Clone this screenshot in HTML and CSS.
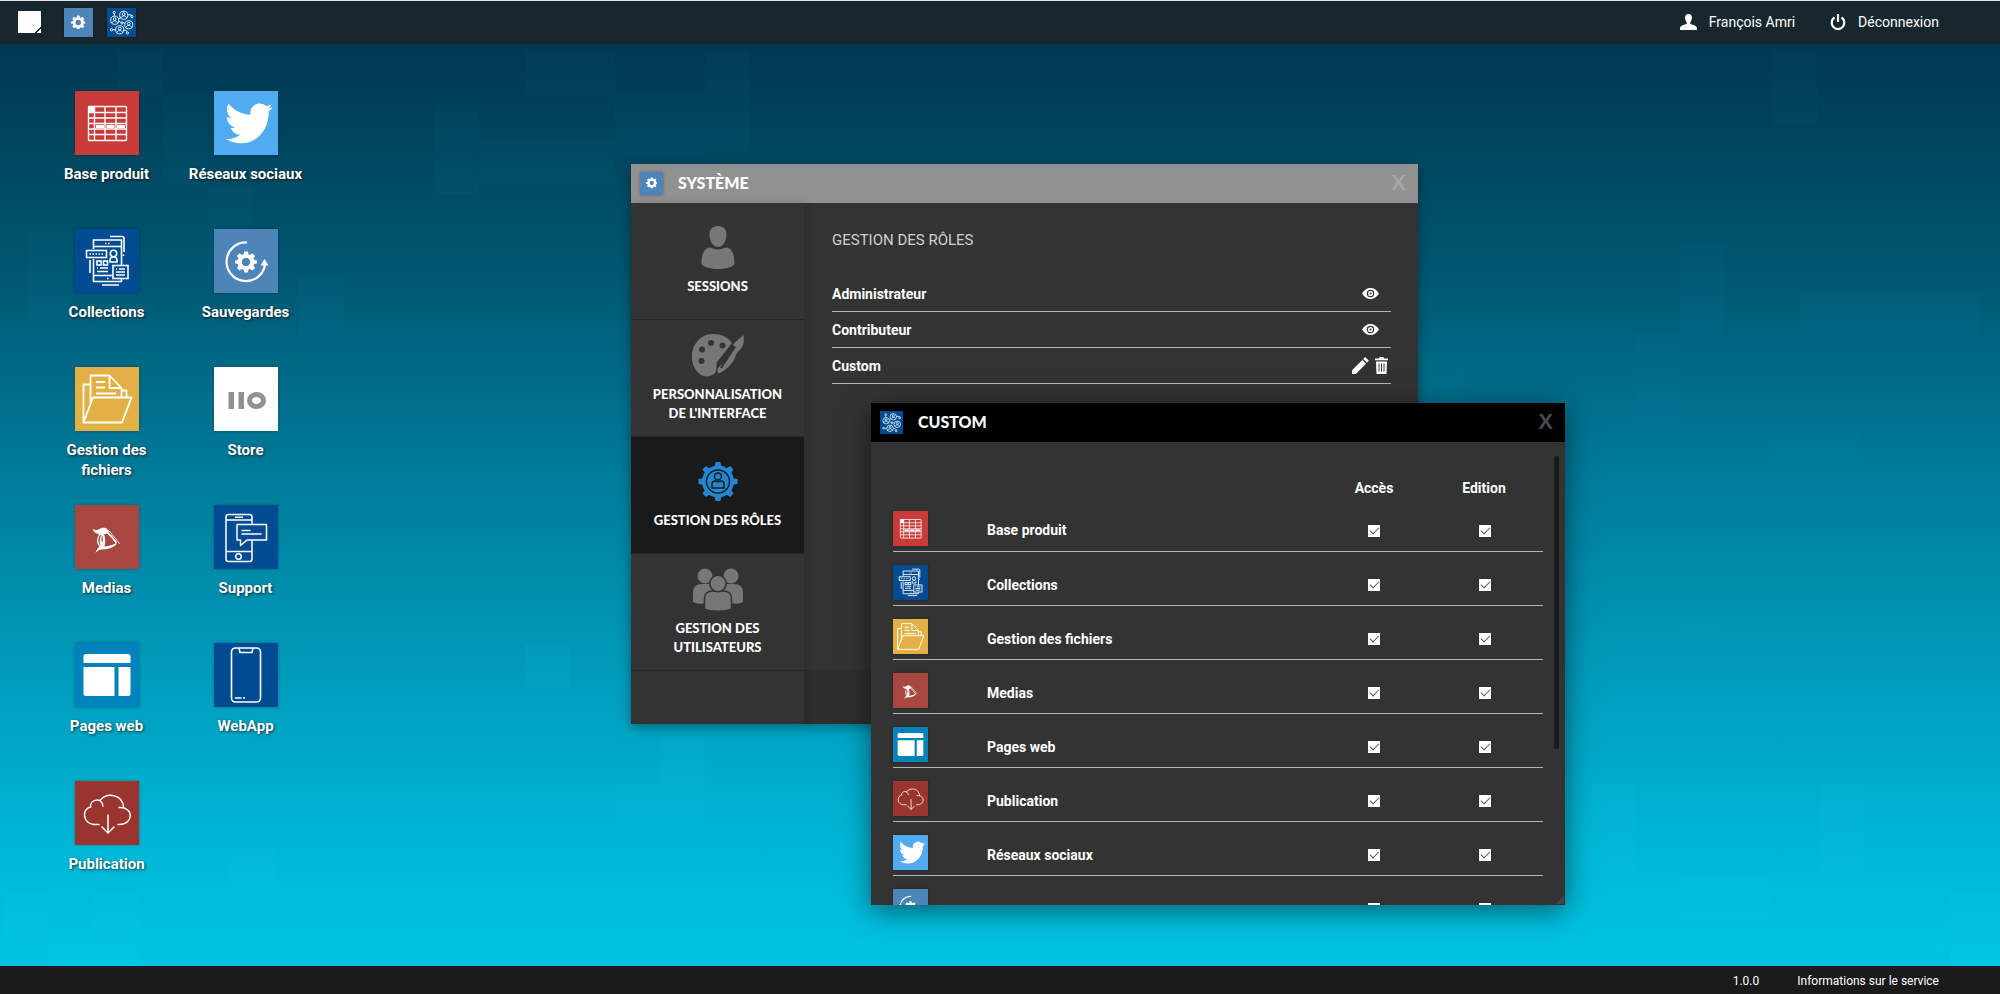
FILE: index.html
```html
<!DOCTYPE html>
<html lang="fr">
<head>
    <meta charset="UTF-8">
    <meta name="viewport" content="width=device-width, initial-scale=1.0">
    <title>Système</title>
    <link rel="stylesheet" href="styles.css">
</head>
<body>

<!-- Icônes -->
<svg class="sprite" aria-hidden="true">
    <symbol id="i-cog" viewBox="0 0 24 24">
        <path fill="currentColor" fill-rule="evenodd" d="M10 1h4l.6 3 1.9.8L19 3.1 21.9 6l-1.7 2.5.8 1.9 3 .6v3l-3 .6-.8 1.9 1.7 2.5-2.900 2.900-2.500-1.700-1.900.8-.6 3h-4l-.6-3-1.900-.8L5 21.900 2.100 19l1.700-2.500-.8-1.900-3-.6v-3l3-.6.8-1.900L2.100 6 5 3.100l2.500 1.700L9.400 4zM12 8a4.500 4.500 0 1 0 0 9 4.500 4.500 0 0 0 0-9z"/>
    </symbol>
    <symbol id="i-network" viewBox="0 0 64 64">
        <g fill="none" stroke="#fff" stroke-width="2">
            <circle cx="37" cy="16" r="9"/><circle cx="37" cy="13.500" r="3"/><path d="M31 22c1-6 11-6 12 0"/>
            <circle cx="17" cy="27" r="9"/><circle cx="17" cy="24.500" r="3"/><path d="M11 33c1-6 11-6 12 0"/>
            <circle cx="48" cy="37" r="9"/><circle cx="48" cy="34.500" r="3"/><path d="M42 43c1-6 11-6 12 0"/>
            <circle cx="28" cy="48" r="9"/><circle cx="28" cy="45.500" r="3"/><path d="M22 54c1-6 11-6 12 0"/>
            <circle cx="16" cy="10" r="2.500"/><path d="M16 13v5"/>
            <circle cx="55" cy="19" r="2.500"/><path d="M46 15h7v2M26 24l4-3M26 30h3l2 2M39 34l-3-3"/>
            <circle cx="33" cy="33" r="2.500"/>
            <circle cx="10" cy="48" r="2.500"/><path d="M13 48h6M37 49h5l2 3"/>
            <circle cx="45" cy="55" r="2.500"/>
        </g>
    </symbol>
    <symbol id="i-base" viewBox="0 0 64 64">
        <g fill="none" stroke="#fff" stroke-width="1.400">
            <rect x="13.500" y="15.500" width="38" height="34" rx="1"/>
            <path d="M19.500 15.500v34M30 15.500v34M41 15.500v34M13.500 21.500h38M13.500 27h38M13.500 32.500h38M13.500 38h38M13.500 43.500h38"/>
        </g>
        <path fill="#fff" d="M13 15h7v7h-7zM21 34h8v3h-8zM31.500 34h8v3h-8zM42 34h8v3h-8z"/>
    </symbol>
    <symbol id="i-collections" viewBox="0 0 64 64">
        <g fill="none" stroke="#fff" stroke-width="1.600">
            <path d="M18.500 20v-9h28v26M18.500 30v22.500h28V50M18.500 17.500h28M18.500 46.500h19M35 7.500h12a2 2 0 0 1 2 2V23M15 31v13M27 56h17"/>
            <rect x="11.500" y="21.500" width="20" height="7"/>
            <circle cx="38.500" cy="24.500" r="3.200"/><path d="M35 33v-2c0-4 7-4 7 0v2z"/>
            <rect x="22" y="32" width="4" height="4"/><rect x="28.500" y="32" width="4" height="4"/>
            <path d="M22 39h1M25 39h8M22 42.500h11"/>
            <rect x="38" y="36.500" width="15" height="13"/><path d="M41 40h1M44 40h6M41 43h9M41 46h9"/>
            <path d="M14.500 25h14" stroke-dasharray="1.500 1.500"/><path d="M30 14.500h1.500M33 14.500h1.500M32 49.500h1.500M48.500 25.500v1.500"/>
        </g>
    </symbol>
    <symbol id="i-files" viewBox="0 0 64 64">
        <g fill="none" stroke="#fff" stroke-width="1.800" stroke-linejoin="round">
            <path d="M8.500 55.500 18 30.500h38.500l-9.500 25zM8.500 55V17.500H15M15.500 36V8.500h19l12 12.500v9M34.500 9v12h12M47 23.500h4.500v6.500"/>
            <path d="M21 15h9M21 20.500h9M21 26.500h20"/>
        </g>
    </symbol>
    <symbol id="i-medias" viewBox="0 0 64 64">
        <path fill="#fff" d="M17.500 24c3 1.500 5 1 7 0 2-1.500 5-1.500 7 0l3 3.500-4 1.500c-3 1.500-6 1.500-8-.5-2 0-4-2-5-4.500zM20.500 48c1-3 2-5.500 5-7 5 1 10 0 16-3l-.5 2c-5 3.500-9 4.500-14 4.500-3 0-4.500 1.500-6.500 3.500zM27 28.500l2.500 2c1 4 1 8-.5 12h-3c-2-5-1.500-10 1-14z"/>
        <g fill="none" stroke="#fff">
            <path d="M31 26.500c4 3 7.500 7 10.500 11.500" stroke-width="1.600"/>
            <path d="M25 29c-3 4-3 9 0 13" stroke-width="1.200"/>
            <path d="M25 24.500c3-3 7-1 10 2.500l10 12" stroke-width=".8"/>
        </g>
        <ellipse cx="27.200" cy="34" rx=".7" ry="3" fill="#a84740"/>
    </symbol>
    <symbol id="i-pages" viewBox="0 0 64 64">
        <path fill="#fff" d="M11 11h42a2.500 2.500 0 0 1 2.500 2.500V20h-47v-6.500A2.500 2.500 0 0 1 11 11zM8.500 24h31v29H11a2.500 2.500 0 0 1-2.500-2.500zM43.500 24h12v26.500A2.500 2.500 0 0 1 53 53h-9.500z"/>
    </symbol>
    <symbol id="i-cloud" viewBox="0 0 64 64">
        <g fill="none" stroke="#fff" stroke-width="1.500" stroke-linecap="round">
            <path d="M24 43.500h-5c-12-1-12-16-3.500-17.500C15 18 27 16 28 25M25 19.500c7-9 23-6 23.500 7M44 26.500c15-1 15 17 0 17h-1"/>
            <path d="M33 34v17.500M27 46l6 6 6-6"/>
        </g>
    </symbol>
    <symbol id="i-bird" viewBox="0 0 24 24">
        <path fill="#fff" d="M20.500 7.600c.8-.5 1.200-1.100 1.300-1.500-.5.200-1 .4-1.500.4.600-.4 1-.8 1.200-1.500-.6.400-1.300.6-1.900.7-2.100-2.200-6.500-.7-5.900 3.200-3.300-.1-6.300-1.700-8.300-4.100-1.100 2-.5 4.100 1.100 5.400-.6 0-1.200-.2-1.700-.5 0 1.900 1.200 3.500 3.100 4-.5.200-1.100.2-1.600.1.500 1.500 1.800 2.600 3.500 2.600-1.400 1.100-3.300 1.800-5.600 1.500 8.600 4.900 16.500-1.300 16.300-10.300z"/>
    </symbol>
    <symbol id="i-backup" viewBox="0 0 64 64">
        <path d="M33 13.500a19.300 19.300 0 1 0 18 22" fill="none" stroke="#fff" stroke-width="2.200"/>
        <path d="M50.500 30 46.500 36.500h8z" fill="#fff"/>
        <svg x="20.500" y="21" width="23" height="23" viewBox="0 0 24 25" color="#fff"><use href="#i-cog"/></svg>
    </symbol>
    <symbol id="i-store" viewBox="0 0 64 64">
        <path fill="#919191" d="M14.500 25h5.500v17h-5.500zM24.500 25H30v17h-5.500z"/>
        <ellipse cx="42.500" cy="33.500" rx="7" ry="6" fill="none" stroke="#919191" stroke-width="5"/>
    </symbol>
    <symbol id="i-support" viewBox="0 0 64 64">
        <g fill="none" stroke="#fff" stroke-width="1.500" stroke-linejoin="round">
            <path d="M38 19.500V12a2.500 2.500 0 0 0-2.500-2.500h-21A2.500 2.500 0 0 0 12 12v42a2.500 2.500 0 0 0 2.500 2.500h21A2.500 2.500 0 0 0 38 54V35M12 15h26M12 46.500h26M21 12.200h8"/>
            <circle cx="24.500" cy="51.500" r="2.800"/>
            <path d="M23 19.500h29.500V35H33l-6.500 5.500V35H23zM27.500 25.500h9M27.500 29h20"/>
        </g>
    </symbol>
    <symbol id="i-phone" viewBox="0 0 64 64">
        <g fill="none" stroke="#fff" stroke-width="1.600">
            <rect x="17.500" y="5" width="29" height="54" rx="4"/>
            <path d="M25 5l1 4.500h12L39 5M21 55h6.500M29 55h2"/>
        </g>
    </symbol>
    <symbol id="i-person" viewBox="0 0 52 43">
        <path fill="currentColor" d="M26 0c5.500 0 8.500 3.500 8.500 8.500C34.500 15 31 21 26 21s-8.500-6-8.500-12.500C17.500 3.500 20.500 0 26 0zM17.500 21.500c2 0 4.500 2 8.500 2s6.500-2 8.500-2c5 1 8 5.500 8 16-1 4-10 5.500-16.500 5.500S10.500 41.500 9.500 37.500c0-10.500 3-15 8-16z"/>
    </symbol>
    <symbol id="i-palette" viewBox="0 0 52 43">
        <path fill="currentColor" fill-rule="evenodd" d="M21 0c8 0 15 3 19 9L25 28c-1 3 0 6-1 9-2 5-9 7-15 4C-1 35-3 18 4 9 8 3 14 0 21 0zM19 6a3 3 0 1 0 0 6 3 3 0 0 0 0-6zM30.500 8.500a3 3 0 1 0 0 6 3 3 0 0 0 0-6zM10 12.500a3 3 0 1 0 0 6 3 3 0 0 0 0-6zM9.500 24a3 3 0 1 0 0 6 3 3 0 0 0 0-6z"/>
        <path fill="currentColor" d="M51.500 1c1 6 0 11-3.500 15-3 2-4 4-5 8-3 6-9 12-15 15-3 1-3-3-2-5 7-6 12-13 18-21l-3-2c3-5 7-6 10.500-10z"/>
        <path d="M29 34l13-20" stroke="#333" stroke-width="2"/>
    </symbol>
    <symbol id="i-roles" viewBox="0 0 52 43">
        <g fill="#2485d0">
            <circle cx="26" cy="21.500" r="16"/>
            <g id="teeth"><path d="M23.500 2h5l1 6h-7zM23.500 41h5l1-6h-7zM6.500 19v5l6 1v-7zM45.500 19v5l-6 1v-7z"/></g>
            <use href="#teeth" transform="rotate(45 26 21.500)"/>
        </g>
        <g fill="none" stroke="#1a1a1a" stroke-width="1.400">
            <circle cx="26" cy="21.500" r="11.500"/><circle cx="26" cy="16.500" r="3.500"/>
            <path d="M20 28v-4c0-2 1-3 3-3 2 1 4 1 6 0 2 0 3 1 3 3v4z"/>
        </g>
    </symbol>
    <symbol id="i-users" viewBox="0 0 52 43">
        <g fill="currentColor">
            <circle cx="13" cy="8" r="7.500"/><circle cx="39" cy="8" r="7.500"/>
            <path d="M1 34V25c0-6 3-9 9-9h32c6 0 9 3 9 9v9c-4 2-8 2-12 1H13c-4 1-8 1-12-1z"/>
        </g>
        <path d="M20 10h12v8H20z" fill="#333"/>
        <g fill="currentColor" stroke="#333" stroke-width="1.500">
            <path d="M12.500 41V31c0-5 3-8 8-8h11c5 0 8 3 8 8v10c-7 3-20 3-27 0z"/><circle cx="26" cy="15.500" r="8.200"/>
        </g>
    </symbol>
    <symbol id="i-eye" viewBox="0 0 17 11">
        <path fill="currentColor" fill-rule="evenodd" d="M8.500 0C12 0 15 2 17 5.500 15 9 12 11 8.500 11S2 9 0 5.500C2 2 5 0 8.500 0zm0 1.800a3.700 3.700 0 1 0 0 7.400 3.700 3.700 0 0 0 0-7.400z"/>
        <circle cx="8.500" cy="5.500" r="1.800" fill="none" stroke="currentColor" stroke-width="1.500"/>
    </symbol>
    <symbol id="i-edit" viewBox="0 0 17 17">
        <path fill="currentColor" d="M0 13.200 10.300 3l3.700 3.700L3.800 17H0zM11.200 2l2-2 3.700 3.700-2 2z"/>
    </symbol>
    <symbol id="i-trash" viewBox="0 0 13 17">
        <path fill="currentColor" fill-rule="evenodd" d="M0 1.500h4L4.700 0h3.600L9 1.500h4V3.200H0zM1 4.500h11L11.500 17h-10zM3.500 6.500v8h1v-8zm2.500 0v8h1v-8zm2.500 0v8h1v-8z"/>
    </symbol>
    <symbol id="i-user" viewBox="0 0 17 16">
        <path fill="currentColor" d="M8.500 0c2.300 0 3.600 1.500 3.400 4-.1 2-.8 3.500-1.600 4.200v1.600c2.500 1.200 6.200 1.700 6.700 4.200v2H0v-2c.5-2.500 4.200-3 6.700-4.200V8.200C5.900 7.500 5.200 6 5.100 4 4.900 1.500 6.200 0 8.500 0z"/>
    </symbol>
    <symbol id="i-power" viewBox="0 0 16 17">
        <path d="M4.500 3.500a6.300 6.300 0 1 0 7 0M8 0v8" fill="none" stroke="currentColor" stroke-width="2.200"/>
    </symbol>
</svg>

<header class="topbar">
    <nav class="tasks">
        <button class="show-desktop" aria-label="Bureau"></button>
        <button class="tile task steel" aria-label="Système"><svg class="small-cog"><use href="#i-cog"/></svg></button>
        <button class="tile task navy" aria-label="Custom"><svg><use href="#i-network"/></svg></button>
    </nav>
    <div class="session">
        <a href="#" class="user"><svg><use href="#i-user"/></svg>François Amri</a>
        <a href="#" class="logout"><svg><use href="#i-power"/></svg>Déconnexion</a>
    </div>
</header>

<main class="desktop">
    <svg class="mosaic" aria-hidden="true">
        <g fill="#12a0c0" fill-opacity=".04">
            <path d="M118 6h45v45h-45zM163 51h45v90h-45zM208 141h45v45h-45zM27 187h45v90h-45zM208 187h45v45h-45zM298 232h45v60h-45z"/>
            <path d="M434 60h45v90h-45zM525 6h90v45h-90zM615 51h90v60h-90zM480 96h135v45H480zM705 6h45v100h-45zM1772 6h45v75h-45zM1420 308h45v45h-45z"/>
            <path d="M1500 380h45v45h-45zM1680 200h45v90h-45zM1635 290h45v90h-45zM1770 380h90v45h-90zM1800 250h180v45h-180zM1680 560h45v45h-45z"/>
        </g>
        <g fill="#20e0ff" fill-opacity=".05">
            <path d="M230 803h45v45h-45zM4 848h45v45H4zM94 848h45v45H94zM49 893h90v30H49zM615 740h90v45h-90zM660 695h45v45h-45zM525 600h45v45h-45zM1590 740h45v90h-45zM1680 830h90v45h-90zM1820 740h45v90h-45zM1950 850h50v70h-50z"/>
        </g>
    </svg>

    <div class="shortcuts">
        <a href="#" class="shortcut"><span class="tile red"><svg><use href="#i-base"/></svg></span>Base produit</a>
        <a href="#" class="shortcut"><span class="tile navy"><svg><use href="#i-collections"/></svg></span>Collections</a>
        <a href="#" class="shortcut"><span class="tile yellow"><svg><use href="#i-files"/></svg></span>Gestion des fichiers</a>
        <a href="#" class="shortcut"><span class="tile brick"><svg><use href="#i-medias"/></svg></span>Medias</a>
        <a href="#" class="shortcut"><span class="tile blue"><svg><use href="#i-pages"/></svg></span>Pages web</a>
        <a href="#" class="shortcut"><span class="tile maroon"><svg><use href="#i-cloud"/></svg></span>Publication</a>
        <a href="#" class="shortcut"><span class="tile sky"><svg><use href="#i-bird"/></svg></span>Réseaux sociaux</a>
        <a href="#" class="shortcut"><span class="tile steel"><svg><use href="#i-backup"/></svg></span>Sauvegardes</a>
        <a href="#" class="shortcut"><span class="tile white"><svg><use href="#i-store"/></svg></span>Store</a>
        <a href="#" class="shortcut"><span class="tile navy"><svg><use href="#i-support"/></svg></span>Support</a>
        <a href="#" class="shortcut"><span class="tile navy"><svg><use href="#i-phone"/></svg></span>WebApp</a>
    </div>

    <section class="window system">
        <header class="titlebar">
            <span class="tile steel"><svg class="small-cog"><use href="#i-cog"/></svg></span>
            <h1>Système</h1>
            <button class="close" aria-label="Fermer">X</button>
        </header>
        <div class="system-body">
            <nav class="sections">
                <a href="#"><svg><use href="#i-person"/></svg>Sessions</a>
                <a href="#"><svg><use href="#i-palette"/></svg>Personnalisation de l'interface</a>
                <a href="#" class="active"><svg><use href="#i-roles"/></svg>Gestion des rôles</a>
                <a href="#"><svg><use href="#i-users"/></svg>Gestion des utilisateurs</a>
            </nav>
            <div class="panel">
                <div class="roles">
                    <h2>Gestion des rôles</h2>
                    <ul>
                        <li>Administrateur <button class="view" aria-label="Voir"><svg><use href="#i-eye"/></svg></button></li>
                        <li>Contributeur <button class="view" aria-label="Voir"><svg><use href="#i-eye"/></svg></button></li>
                        <li>Custom
                            <button class="edit" aria-label="Modifier"><svg><use href="#i-edit"/></svg></button>
                            <button class="delete" aria-label="Supprimer"><svg><use href="#i-trash"/></svg></button>
                        </li>
                    </ul>
                </div>
                <div class="panel-footer"></div>
            </div>
        </div>
    </section>

    <section class="window custom">
        <header class="titlebar">
            <span class="tile navy"><svg><use href="#i-network"/></svg></span>
            <h1>Custom</h1>
            <button class="close" aria-label="Fermer">X</button>
        </header>
        <div class="custom-body">
            <table class="rights">
                <thead>
                    <tr><th class="c-icon"></th><th></th><th class="c-access">Accès</th><th class="c-edit">Edition</th></tr>
                </thead>
                <tbody>
                    <tr><td><span class="tile red"><svg><use href="#i-base"/></svg></span></td><td>Base produit</td><td><input type="checkbox" aria-label="Accès Base produit" checked></td><td><input type="checkbox" aria-label="Edition Base produit" checked></td></tr>
                    <tr><td><span class="tile navy"><svg><use href="#i-collections"/></svg></span></td><td>Collections</td><td><input type="checkbox" aria-label="Accès Collections" checked></td><td><input type="checkbox" aria-label="Edition Collections" checked></td></tr>
                    <tr><td><span class="tile yellow"><svg><use href="#i-files"/></svg></span></td><td>Gestion des fichiers</td><td><input type="checkbox" aria-label="Accès Gestion des fichiers" checked></td><td><input type="checkbox" aria-label="Edition Gestion des fichiers" checked></td></tr>
                    <tr><td><span class="tile brick"><svg><use href="#i-medias"/></svg></span></td><td>Medias</td><td><input type="checkbox" aria-label="Accès Medias" checked></td><td><input type="checkbox" aria-label="Edition Medias" checked></td></tr>
                    <tr><td><span class="tile blue"><svg><use href="#i-pages"/></svg></span></td><td>Pages web</td><td><input type="checkbox" aria-label="Accès Pages web" checked></td><td><input type="checkbox" aria-label="Edition Pages web" checked></td></tr>
                    <tr><td><span class="tile maroon"><svg><use href="#i-cloud"/></svg></span></td><td>Publication</td><td><input type="checkbox" aria-label="Accès Publication" checked></td><td><input type="checkbox" aria-label="Edition Publication" checked></td></tr>
                    <tr><td><span class="tile sky"><svg><use href="#i-bird"/></svg></span></td><td>Réseaux sociaux</td><td><input type="checkbox" aria-label="Accès Réseaux sociaux" checked></td><td><input type="checkbox" aria-label="Edition Réseaux sociaux" checked></td></tr>
                    <tr><td><span class="tile steel"><svg><use href="#i-backup"/></svg></span></td><td></td><td><input type="checkbox" aria-label="Accès" checked></td><td><input type="checkbox" aria-label="Edition" checked></td></tr>
                </tbody>
            </table>
            <div class="scroll"><div class="thumb"></div></div>
        </div>
        <span class="grip"></span>
    </section>
</main>

<footer class="bottombar">
    <span>1.0.0</span>
    <a href="#">Informations sur le service</a>
</footer>

</body>
</html>
```
FILE: styles.css
```css
* { box-sizing: border-box; }
body { margin: 0; min-height: 100vh; display: flex; flex-direction: column; font-family: Roboto, "Liberation Sans", sans-serif; font-size: 14px; color: #fff; }
a { color: inherit; text-decoration: none; }
button { padding: 0; border: 0; background: none; color: inherit; font: inherit; cursor: pointer; }
svg { display: block; }
.sprite { position: absolute; width: 0; height: 0; }

/* Barres */
.topbar { display: flex; justify-content: space-between; align-items: center; height: 44px; padding: 0 61px 1px 18px; background: #17272d; border-top: 1px solid #dfe5e5; }
.tasks, .session, .session a { display: flex; align-items: center; }
.show-desktop { width: 23px; height: 22px; margin-right: 23px; background: linear-gradient(135deg, #fff 86%, #17272d 86%, #17272d 89%, #fff 89%); }
.task { width: 29px; height: 29px; margin-right: 14px; }
.session { gap: 35px; }
.session a { gap: 12px; line-height: 20px; }
.user svg { width: 17px; height: 16px; }
.logout svg { width: 16px; height: 17px; }
.bottombar { display: flex; justify-content: flex-end; align-items: center; gap: 38px; height: 28px; padding: 2px 61px 0; background: #1a1a1a; font-size: 12px; }

/* Tuiles */
.tile { display: flex; align-items: center; justify-content: center; flex: none; box-shadow: 0 0 3px rgba(0, 0, 0, .3); }
.tile svg { width: 100%; height: 100%; }
.tile .small-cog { width: 50%; height: 50%; }
.red { background: #c73b39; }
.navy { background: #004b91; }
.yellow { background: #e2b044; }
.brick { background: #a84740; }
.blue { background: #0082ba; }
.maroon { background: #99342f; }
.sky { background: #51abf1; }
.steel { background: #4d85b9; }
.white { background: #fff; }

/* Bureau */
.desktop { position: relative; flex: 1; overflow: hidden; background: linear-gradient(#003850 0%, #005670 24%, #007796 44%, #0098b8 66%, #00b5d5 86%, #00c4e3 100%); }
.mosaic { position: absolute; width: 100%; height: 100%; }
.shortcuts { position: relative; display: grid; grid-template-rows: repeat(6, 138px); grid-auto-columns: 139px; grid-auto-flow: column; justify-content: start; padding: 47px 37px; }
.shortcut { display: flex; flex-direction: column; align-items: center; padding: 0 10px; font-size: 15px; font-weight: 700; line-height: 20px; text-align: center; text-shadow: 1px 1px 3px rgba(0, 0, 0, .7); }
.shortcut .tile { width: 64px; height: 64px; margin-bottom: 9px; }

/* Fenêtres */
.window { position: absolute; display: flex; flex-direction: column; background: #333; }
.titlebar { display: flex; align-items: center; height: 39px; padding: 0 12px 1px 9px; flex: none; }
.titlebar .tile { width: 23px; height: 23px; }
.titlebar h1 { flex: 1; margin: 0 0 0 15px; font-family: Lato, sans-serif; font-size: 16px; font-weight: 900; line-height: 20px; text-transform: uppercase; }
.close { font-family: "Liberation Sans", sans-serif; font-size: 22px; font-weight: 700; line-height: 24px; color: #aaa4ac; }

.system { left: 631px; top: 120px; width: 787px; height: 560px; box-shadow: 0 3px 12px rgba(0, 0, 0, .35); }
.system .titlebar { background: #919191; }
.system-body { display: flex; flex: 1; }
.sections { position: relative; width: 173px; background: #333; box-shadow: 2px 0 8px rgba(0, 0, 0, .15); }
.sections a { display: flex; flex-direction: column; align-items: center; justify-content: center; gap: 8px; height: 117px; padding: 0 18px; border-bottom: 1px solid #262626; font-family: Lato, sans-serif; font-size: 13px; font-weight: 900; line-height: 19px; text-align: center; text-transform: uppercase; }
.sections a.active { background: #1a1a1a; }
.sections svg { width: 52px; height: 43px; color: #777; }
.panel { display: flex; flex: 1; flex-direction: column; }
.roles { flex: 1; padding: 27px 27px 0 28px; }
.roles h2 { margin: 0 0 26px; font-size: 15px; font-weight: 400; line-height: 20px; color: #d0d0d0; text-transform: uppercase; }
.roles ul { margin: 0; padding: 0; list-style: none; }
.roles li { display: flex; align-items: center; height: 36px; border-bottom: 1px solid #b5b5b5; font-weight: 700; }
.roles li button:first-of-type { margin-left: auto; }
.view { width: 17px; margin-right: 12px; }
.edit { width: 17px; margin-right: 6px; }
.delete { width: 13px; margin-right: 3px; }
.view svg { width: 17px; height: 11px; }
.edit svg { width: 17px; height: 17px; }
.delete svg { width: 13px; height: 17px; }
.panel-footer { height: 55px; background: #2e2e2e; }

.custom { left: 871px; top: 359px; width: 694px; height: 502px; box-shadow: 0 6px 26px rgba(0, 0, 0, .5); }
.custom .titlebar { background: #000; }
.custom .close { color: #4d464e; }
.custom-body { display: flex; flex: 1; min-height: 0; overflow: hidden; }
.rights { flex: 1; align-self: flex-start; margin: 29px 0 0 22px; border-collapse: collapse; table-layout: fixed; font-weight: 700; }
.rights th { height: 26px; padding: 8px 0 0; line-height: 18px; }
.rights .c-icon { width: 94px; }
.rights .c-access { width: 110px; }
.rights .c-edit { width: 114px; padding-right: 4px; }
.rights tbody tr { height: 54px; border-bottom: 1px solid #b5b5b5; }
.rights td { padding: 13px 0 0; }
.rights td:nth-child(1) { padding: 0 0 5px; vertical-align: bottom; }
.rights td:nth-child(n+3) { padding-top: 11px; text-align: center; }
.rights td:nth-child(4) { padding-right: 3px; }
.rights .tile { width: 35px; height: 35px; }
.rights input { display: inline-block; position: relative; width: 12px; height: 12px; margin: 0; background: #fff; appearance: none; vertical-align: middle; }
.rights input:checked::after { content: ""; position: absolute; left: 2px; top: 2px; width: 8px; height: 4px; border: solid #555; border-width: 0 0 1px 1px; transform: rotate(-45deg); }
.scroll { width: 22px; padding: 14px 0 0 11px; }
.thumb { width: 5px; height: 293px; border-radius: 3px; background: #1a1a1a; }
.grip { position: absolute; right: 1px; bottom: 1px; width: 9px; height: 9px; background: linear-gradient(135deg, transparent 50%, #444 50%); }
```
